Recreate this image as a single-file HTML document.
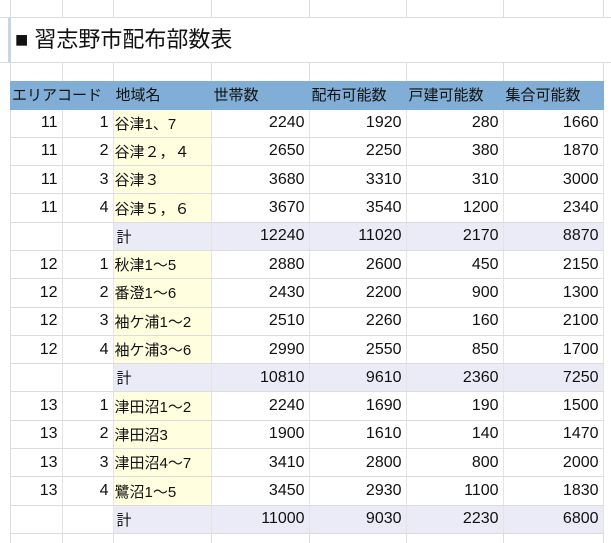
<!DOCTYPE html>
<html><head><meta charset="utf-8"><style>
body{margin:0;width:611px;height:543px;background:#fff;overflow:hidden;font-family:"Liberation Sans","Noto Sans CJK JP",sans-serif;position:relative}
.vl{position:absolute;top:0;bottom:0;width:1px;background:#dcdcdc}
.hl{position:absolute;left:0;right:0;height:1px;background:#dcdcdc}
.title{position:absolute;left:10px;top:18px;width:601px;height:44px;background:#fff;font-size:22px;line-height:44px;padding-left:5px;color:#111}
.title:before{content:"";position:absolute;left:-2px;top:0;bottom:0;width:3px;background:#c8d4ec}
table{position:absolute;left:10px;top:81px;border-collapse:collapse;table-layout:fixed;width:593px;font-size:15px;color:#111}
td{height:28.3px;padding:0 4px 0 3px;box-sizing:border-box;border-bottom:1px solid #dcdcdc;border-right:1px solid #e4e4e4;white-space:nowrap;overflow:visible}
tr.h td{background:#80aed6;border-color:#80aed6;height:28px;text-align:left;padding-left:2px}
td.n{text-align:right;font-size:16px}
td.y{background:#ffffe0;padding-left:1px}
tr.s td.k{background:#ebebf8}
</style></head><body>
<div class="hl" style="top:17px"></div><div class="hl" style="top:62px"></div>
<div class="vl" style="left:10px"></div><div class="vl" style="left:62px"></div><div class="vl" style="left:113px"></div><div class="vl" style="left:211px"></div><div class="vl" style="left:309px"></div><div class="vl" style="left:406px"></div><div class="vl" style="left:503px"></div><div class="vl" style="left:603px"></div>
<div class="title">■ 習志野市配布部数表</div>
<table>
<colgroup><col style="width:52px"><col style="width:51px"><col style="width:98px"><col style="width:98px"><col style="width:97px"><col style="width:97px"><col style="width:100px"></colgroup>
<tr class="h"><td colspan="2">エリアコード</td><td>地域名</td><td>世帯数</td><td>配布可能数</td><td>戸建可能数</td><td>集合可能数</td></tr>
<tr><td class="n">11</td><td class="n">1</td><td class="y">谷津1、7</td><td class="n">2240</td><td class="n">1920</td><td class="n">280</td><td class="n">1660</td></tr>
<tr><td class="n">11</td><td class="n">2</td><td class="y">谷津２，４</td><td class="n">2650</td><td class="n">2250</td><td class="n">380</td><td class="n">1870</td></tr>
<tr><td class="n">11</td><td class="n">3</td><td class="y">谷津３</td><td class="n">3680</td><td class="n">3310</td><td class="n">310</td><td class="n">3000</td></tr>
<tr><td class="n">11</td><td class="n">4</td><td class="y">谷津５，６</td><td class="n">3670</td><td class="n">3540</td><td class="n">1200</td><td class="n">2340</td></tr>
<tr class="s"><td></td><td></td><td class="k">計</td><td class="n k">12240</td><td class="n k">11020</td><td class="n k">2170</td><td class="n k">8870</td></tr>
<tr><td class="n">12</td><td class="n">1</td><td class="y">秋津1～5</td><td class="n">2880</td><td class="n">2600</td><td class="n">450</td><td class="n">2150</td></tr>
<tr><td class="n">12</td><td class="n">2</td><td class="y">番澄1～6</td><td class="n">2430</td><td class="n">2200</td><td class="n">900</td><td class="n">1300</td></tr>
<tr><td class="n">12</td><td class="n">3</td><td class="y">袖ケ浦1～2</td><td class="n">2510</td><td class="n">2260</td><td class="n">160</td><td class="n">2100</td></tr>
<tr><td class="n">12</td><td class="n">4</td><td class="y">袖ケ浦3～6</td><td class="n">2990</td><td class="n">2550</td><td class="n">850</td><td class="n">1700</td></tr>
<tr class="s"><td></td><td></td><td class="k">計</td><td class="n k">10810</td><td class="n k">9610</td><td class="n k">2360</td><td class="n k">7250</td></tr>
<tr><td class="n">13</td><td class="n">1</td><td class="y">津田沼1～2</td><td class="n">2240</td><td class="n">1690</td><td class="n">190</td><td class="n">1500</td></tr>
<tr><td class="n">13</td><td class="n">2</td><td class="y">津田沼3</td><td class="n">1900</td><td class="n">1610</td><td class="n">140</td><td class="n">1470</td></tr>
<tr><td class="n">13</td><td class="n">3</td><td class="y">津田沼4～7</td><td class="n">3410</td><td class="n">2800</td><td class="n">800</td><td class="n">2000</td></tr>
<tr><td class="n">13</td><td class="n">4</td><td class="y">鷺沼1～5</td><td class="n">3450</td><td class="n">2930</td><td class="n">1100</td><td class="n">1830</td></tr>
<tr class="s"><td></td><td></td><td class="k">計</td><td class="n k">11000</td><td class="n k">9030</td><td class="n k">2230</td><td class="n k">6800</td></tr>
</table>
</body></html>
